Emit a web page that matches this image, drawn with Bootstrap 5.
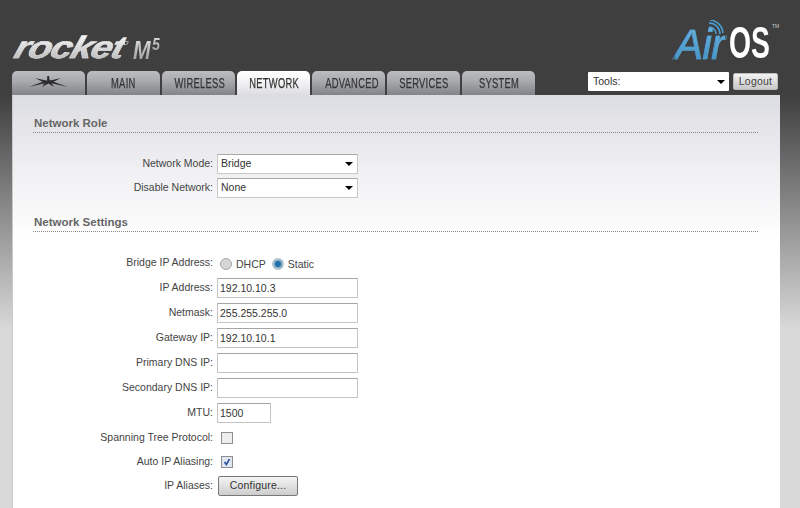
<!DOCTYPE html>
<html lang="en"><head><meta charset="utf-8"><title>AirOS Network</title>
<link href="https://cdn.jsdelivr.net/npm/bootstrap@5.3.0/dist/css/bootstrap.min.css" rel="stylesheet">
<style>
html,body{height:100%;overflow:hidden}
body{background:linear-gradient(#3f3f3f 95px,#d9d9d9 330px);font-family:"Liberation Sans",Arial,sans-serif;font-size:10.5px;color:#444;padding:0 20px 0 12px;display:flex;flex-direction:column}
.head-zone{height:71px;flex:none;position:relative}
.rocket-mark{font-weight:700;font-style:italic;font-size:31px;line-height:1;display:inline-block;transform:scaleX(1.24) skewX(-14deg);transform-origin:left bottom;letter-spacing:-1px;background:linear-gradient(#fff,#b4b4b4);-webkit-background-clip:text;background-clip:text;color:transparent;-webkit-text-stroke:.5px #ddd}
.m5-mark,.five-mark{position:absolute;font-weight:700;font-style:italic;line-height:1;display:inline-block;transform-origin:left bottom;background:linear-gradient(#ddd,#999);-webkit-background-clip:text;background-clip:text;color:transparent}
.m5-mark{font-size:25px;transform:scaleX(.85);left:122px;top:6px}
.five-mark{font-size:17px;transform:scaleX(.85);left:141px;top:4px}
.brand-a{position:absolute;left:-1px;top:32px;white-space:nowrap}
.air-mark{position:absolute;right:-1px;top:16px;width:110px;height:46px}
.air-txt{position:absolute;left:4px;top:8px;font-style:italic;font-size:42px;line-height:1;letter-spacing:-.5px;background:linear-gradient(#6fb7e4,#3f8dc0);-webkit-background-clip:text;background-clip:text;color:transparent;-webkit-text-stroke:.6px #4f9fd0}
.os-txt{position:absolute;left:58px;top:4px;font-size:45px;font-weight:700;line-height:1;color:#fff;display:inline-block;transform:scaleX(.63);transform-origin:left top}
.tm-txt{position:absolute;left:101px;top:8px;font-size:5px;color:#ccc;line-height:1}
.wifi-arc{position:absolute;left:36px;top:4px}
.tabs-zone{height:24px;flex:none}
.air-tabs{border:0;gap:2px;flex-wrap:nowrap}
.air-tabs .nav-link{width:73px;height:24px;padding:5px 0 0;margin:0;border:0;border-radius:5px 5px 0 0;text-align:center;font-size:14px;line-height:14px;color:#333;background:linear-gradient(#bcbdc0 0,#a9abae 40%,#818388 100%);letter-spacing:.4px;white-space:nowrap}
.air-tabs .nav-link span{display:inline-block;transform:scaleX(.67);-webkit-text-stroke:.25px #333}
.air-tabs .nav-link svg{display:block;margin:0 auto}
.air-tabs .nav-link.active{color:#333;background:linear-gradient(#fff 0,#f3f3f5 45%,#dcdde2 100%)}
.tool-select{width:141px;height:19px;margin:1px 4px 0 0;position:relative}
.air-select{height:100%;padding:0 0 0 3px;border:0;border-radius:1px;background-image:none;font-size:10.5px;color:#333;box-shadow:none}
.tool-select .air-select{padding-left:5px}
.drop-tri{position:absolute;top:50%;margin-top:-2px;right:4px;width:0;height:0;border:4px solid transparent;border-top:4px solid #000;border-bottom:0;pointer-events:none}
.logout-btn{width:45px;height:17px;padding:0;margin:2px 2px 0 0;font-size:10.5px;line-height:15px;color:#444;border:1px solid #bbb;border-radius:2px;background:linear-gradient(#f2f2f2,#c9c9c9);letter-spacing:.2px}
.panel-main{flex:1 1 auto;background:linear-gradient(#dcdde2 0,#f0f0f3 75px,#fbfbfc 130px,#fff 140px);box-shadow:inset 1px 0 0 #c9c9cc;padding:22px 22px 0 21px}
.sec-title{font-size:11.5px;font-weight:700;color:#666;line-height:13px;padding:0 0 2px 1px;height:16px;border-bottom:1px dotted #888;margin:0}
.frm-row{display:flex;align-items:center;height:25px}
.frm-row label,.lbl-cell{width:180px;margin:0 4px 0 0;text-align:right;flex:none;color:#444}
.field-w{width:141px;height:20px;position:relative;flex:none}
.air-input{width:141px;height:20px;padding:0 0 0 2px;border:1px solid #c4c4c4;border-top-color:#a5a5a5;border-radius:1px;font-size:10.5px;color:#333;background:#fff;box-shadow:none}
.air-input.mtu{width:54px}
.sel-box{border:1px solid #c8c8c8;border-top-color:#aaa;border-radius:1px}
.radio-set{display:flex;align-items:center;padding-left:3px;margin-top:3px}
.air-radio{width:12px;height:12px;margin:0 4px 0 0;border:1px solid #a8a8a8;background:#d6d6d6;flex:none}
.air-radio:checked{background:#1f6fa8;border:2px solid #b5c3cc;background-image:none;box-shadow:inset 0 0 0 1px #7fb0d0}
.radio-txt{margin:2px 6px 0 0;color:#444}
.form-check-input.air-check[type=checkbox]{width:12px;height:12px;margin:0 0 0 4px;border:1px solid #8f8f8f;border-radius:0;background-color:#eee;float:none}
.form-check-input.air-check[type=checkbox]:checked{background-color:#dfe6f2;border-color:#8f8f8f;background-image:url("data:image/svg+xml,%3Csvg xmlns='http://www.w3.org/2000/svg' viewBox='0 0 12 12'%3E%3Cpath d='M3 6l2.2 3L9 2.5' fill='none' stroke='%232a4f9c' stroke-width='2'/%3E%3C/svg%3E")}
.cfg-btn{width:80px;height:20px;padding:0;margin-left:1px;font-size:10.5px;line-height:17px;color:#333;border:1px solid #777;border-radius:2px;background:linear-gradient(#f4f4f4,#cdcdcd);letter-spacing:.2px}
.gap-role{height:19px}.gap-a{height:17px}.gap-b{height:18px}
.row-24{height:24px}.row-23{height:23px}
</style></head>
<body>
<div class="head-zone">
  <div class="brand-a"><span class="rocket-mark">rocket</span><span class="m5-mark">M</span><span class="five-mark">5</span></div>
  <div class="air-mark">
    <span class="air-txt">Air</span>
    <svg class="wifi-arc" width="22" height="18" viewBox="0 0 22 18" fill="none" stroke="#4a9fd4" stroke-width="1.6"><path d="M2 7a7 7 0 0 1 7 7"/><path d="M2 3a11 11 0 0 1 11 11"/><path d="M3 0a14 14 0 0 1 13 13"/></svg>
    <span class="os-txt">OS</span><span class="tm-txt">TM</span>
  </div>
</div>
<div class="tabs-zone d-flex justify-content-between">
  <ul class="nav nav-tabs air-tabs">
    <li class="nav-item"><a class="nav-link" href="#" aria-label="Ubiquiti"><svg width="40" height="12" viewBox="0 0 40 12" fill="#2c2c2c"><path d="M0 11 L17 4.5 L19 6.5 Z"/><path d="M39 11 L21 4.5 L19 6.5 Z"/><path d="M6 2 L19 5 L17 7.5 Z"/><path d="M32 2 L19 5 L21 7.5 Z"/><path d="M18.3 0 L20 0 L21 6 L18 6 Z"/><path d="M16.5 5.5 L21.5 5.5 L25 11 L19.5 7.5 L13 11 Z"/></svg></a></li>
    <li class="nav-item"><a class="nav-link" href="#"><span>MAIN</span></a></li>
    <li class="nav-item"><a class="nav-link" href="#"><span>WIRELESS</span></a></li>
    <li class="nav-item"><a class="nav-link active" href="#"><span>NETWORK</span></a></li>
    <li class="nav-item"><a class="nav-link" href="#"><span>ADVANCED</span></a></li>
    <li class="nav-item"><a class="nav-link" href="#"><span>SERVICES</span></a></li>
    <li class="nav-item"><a class="nav-link" href="#"><span>SYSTEM</span></a></li>
  </ul>
  <div class="d-flex align-items-start">
    <div class="tool-select"><select class="form-select air-select"><option>Tools:</option></select><span class="drop-tri"></span></div>
    <button class="btn logout-btn" type="button">Logout</button>
  </div>
</div>
<main class="panel-main">
  <h2 class="sec-title">Network Role</h2>
  <div class="gap-role"></div>
  <div class="frm-row row-24"><label>Network Mode:</label><div class="field-w sel-box"><select class="form-select air-select"><option>Bridge</option></select><span class="drop-tri"></span></div></div>
  <div class="frm-row row-23"><label>Disable Network:</label><div class="field-w sel-box"><select class="form-select air-select"><option>None</option></select><span class="drop-tri"></span></div></div>
  <div class="gap-a"></div>
  <h2 class="sec-title">Network Settings</h2>
  <div class="gap-b"></div>
  <div class="frm-row"><span class="lbl-cell">Bridge IP Address:</span><div class="radio-set"><input class="form-check-input air-radio" type="radio" name="ipm"><span class="radio-txt">DHCP</span><input class="form-check-input air-radio" type="radio" name="ipm" checked><span class="radio-txt">Static</span></div></div>
  <div class="frm-row"><label>IP Address:</label><input class="form-control air-input" value="192.10.10.3"></div>
  <div class="frm-row"><label>Netmask:</label><input class="form-control air-input" value="255.255.255.0"></div>
  <div class="frm-row"><label>Gateway IP:</label><input class="form-control air-input" value="192.10.10.1"></div>
  <div class="frm-row"><label>Primary DNS IP:</label><input class="form-control air-input"></div>
  <div class="frm-row"><label>Secondary DNS IP:</label><input class="form-control air-input"></div>
  <div class="frm-row"><label>MTU:</label><input class="form-control air-input mtu" value="1500"></div>
  <div class="frm-row"><span class="lbl-cell">Spanning Tree Protocol:</span><input class="form-check-input air-check" type="checkbox"></div>
  <div class="frm-row row-23"><span class="lbl-cell">Auto IP Aliasing:</span><input class="form-check-input air-check" type="checkbox" checked></div>
  <div class="frm-row"><span class="lbl-cell">IP Aliases:</span><button class="btn cfg-btn" type="button">Configure...</button></div>
</main>
<script src="https://cdn.jsdelivr.net/npm/bootstrap@5.3.0/dist/js/bootstrap.bundle.min.js"></script>
</body></html>
